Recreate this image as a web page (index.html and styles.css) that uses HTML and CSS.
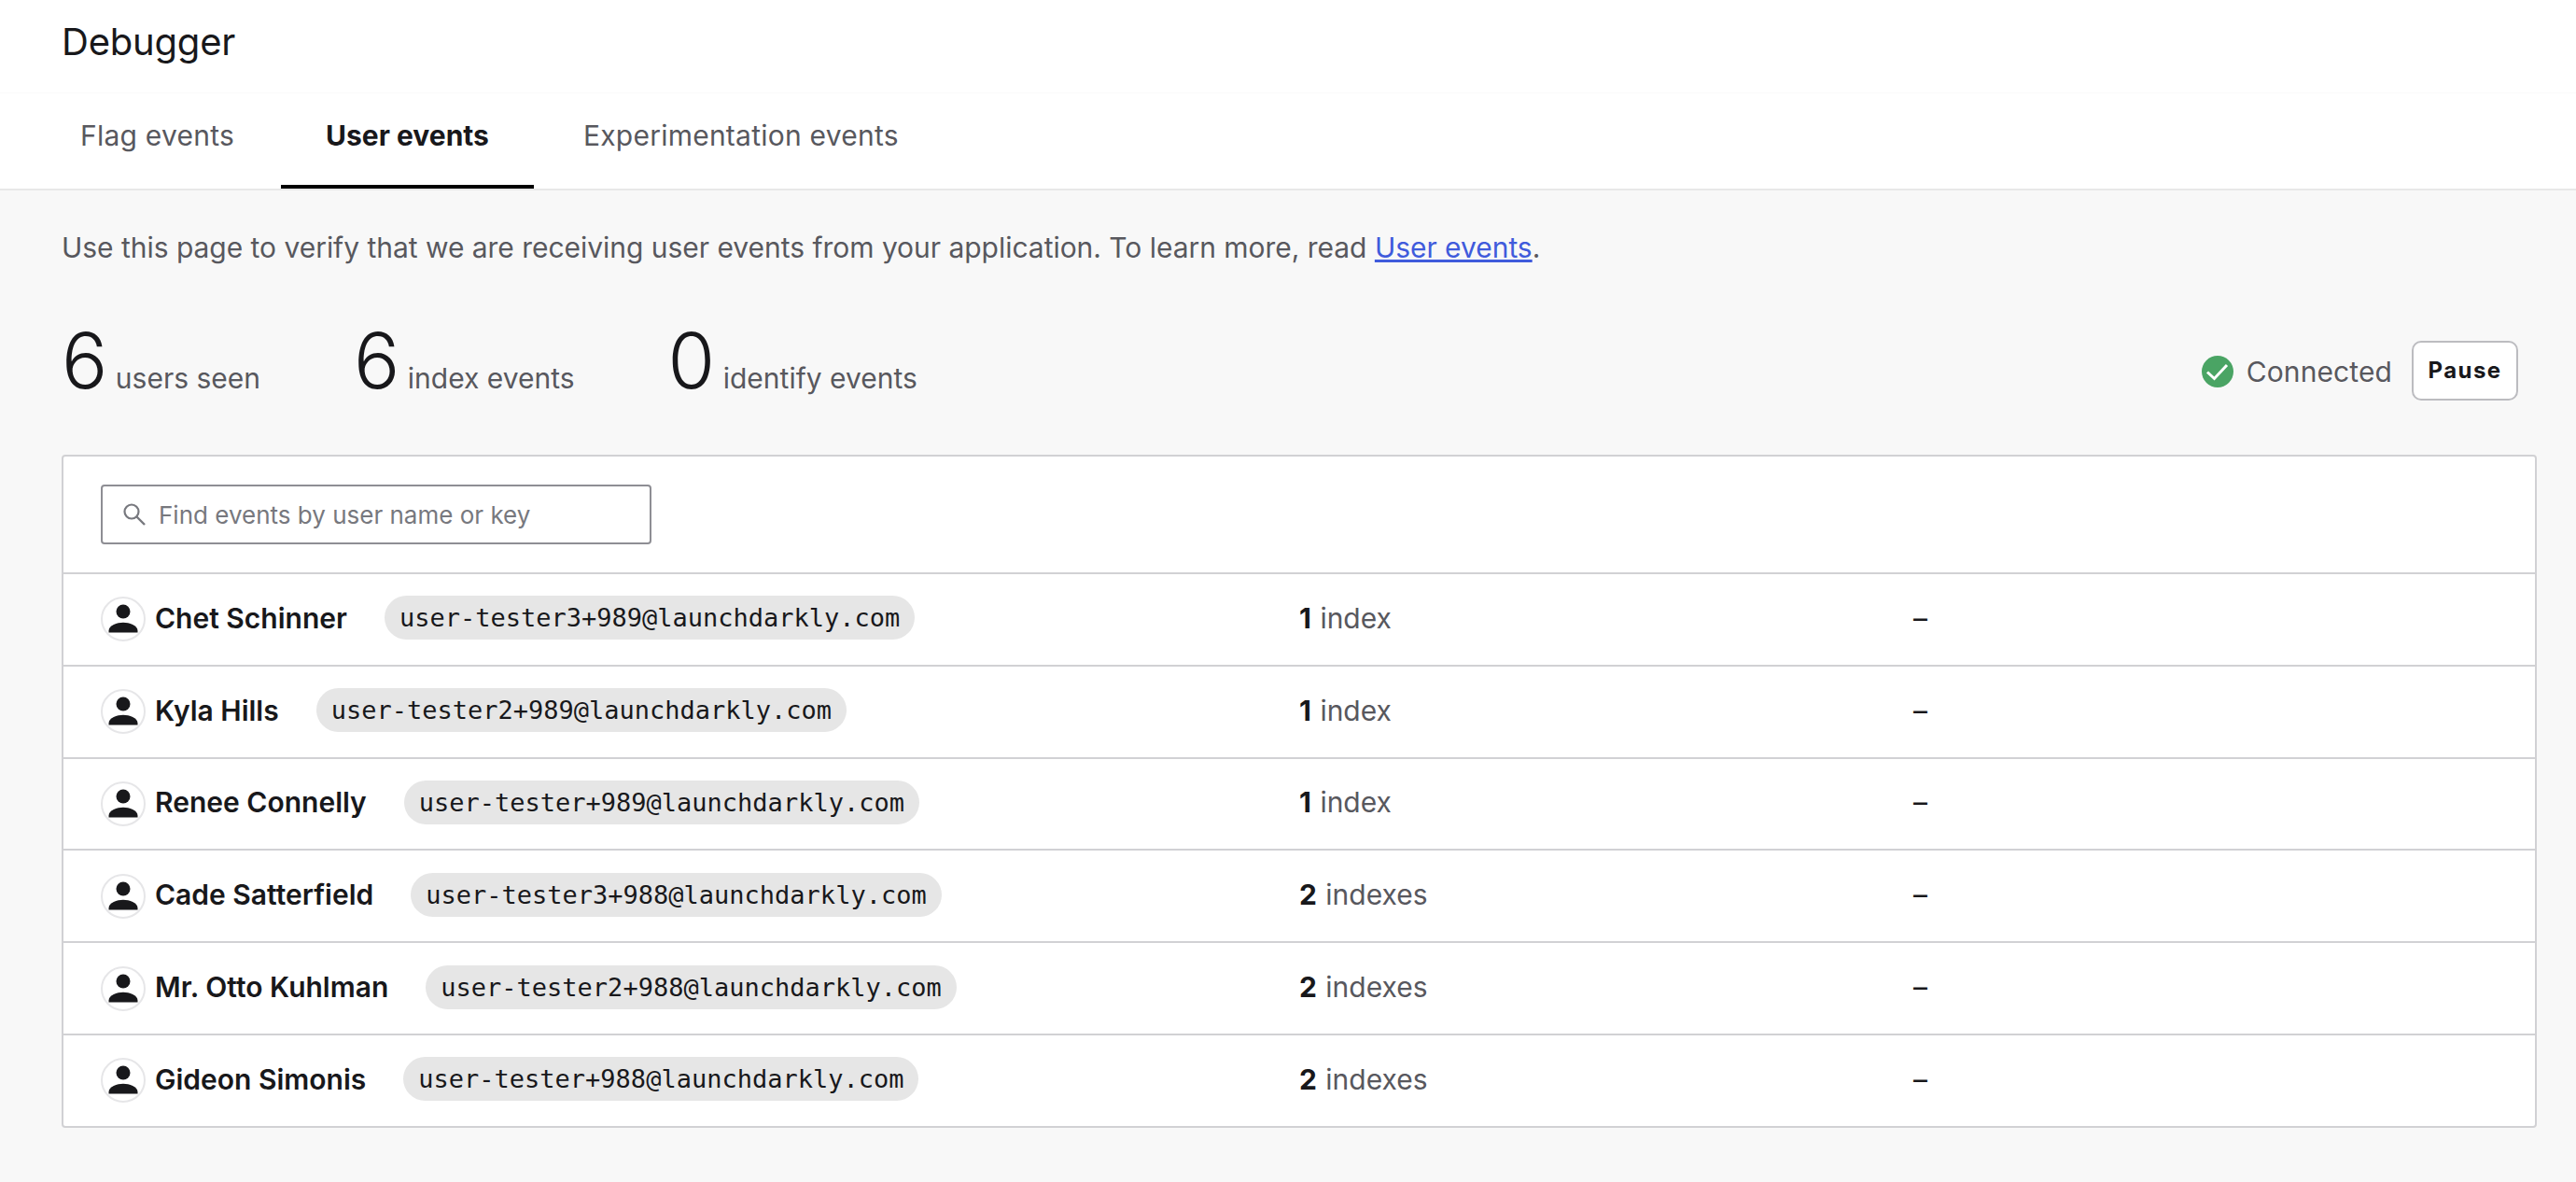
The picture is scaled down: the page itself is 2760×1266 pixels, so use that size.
FILE: index.html
```html
<!DOCTYPE html>
<html lang="en">
<head>
    <meta charset="UTF-8">
    <title>Debugger</title>
    <link rel="stylesheet" href="styles.css">
</head>
<body>
    <header class="header">
        <h1 class="title">Debugger</h1>
        <nav class="tabs">
            <a href="#" class="tab">Flag events</a>
            <a href="#" class="tab tab-active">User events</a>
            <a href="#" class="tab">Experimentation events</a>
        </nav>
    </header>

    <main class="main">
        <p class="intro">Use this page to verify that we are receiving user events from your application. To learn more, read <a href="#">User events</a>.</p>

        <section class="summary">
            <div class="stats">
                <div class="stat"><span class="stat-num">6</span> <span class="stat-label">users seen</span></div>
                <div class="stat"><span class="stat-num">6</span> <span class="stat-label">index events</span></div>
                <div class="stat"><span class="stat-num">0</span> <span class="stat-label">identify events</span></div>
            </div>
            <div class="status">
                <svg class="status-icon" viewBox="0 0 34 34">
                    <circle cx="17" cy="17" r="17" fill="#4aa464"/>
                    <path d="M6 17.5l7.5 7L27 10" fill="none" stroke="#fff" stroke-width="3"/>
                </svg>
                <span class="status-text">Connected</span>
                <button class="pause-btn">Pause</button>
            </div>
        </section>

        <section class="card">
            <div class="search-row">
                <label class="search">
                    <svg class="search-icon" viewBox="0 0 24 24">
                        <circle cx="9" cy="9" r="7.5" fill="none" stroke="#77787e" stroke-width="2.2"/>
                        <path d="M14.5 14.5L23 23" fill="none" stroke="#77787e" stroke-width="2.4"/>
                    </svg>
                    <input type="text" placeholder="Find events by user name or key">
                </label>
            </div>

            <div class="row">
                <div class="user">
                    <span class="avatar"><svg viewBox="2 2 44 44"><circle cx="24" cy="16" r="7.5"/><path d="M8.5 38.5v-2c0-6 9-8.8 15.5-8.8s15.5 2.8 15.5 8.8v2z"/></svg></span>
                    <span class="user-name">Chet Schinner</span>
                    <code class="user-key">user-tester3+989@launchdarkly.com</code>
                </div>
                <div class="count"><b>1</b> index</div>
                <div class="dash">–</div>
            </div>
            <div class="row">
                <div class="user">
                    <span class="avatar"><svg viewBox="2 2 44 44"><circle cx="24" cy="16" r="7.5"/><path d="M8.5 38.5v-2c0-6 9-8.8 15.5-8.8s15.5 2.8 15.5 8.8v2z"/></svg></span>
                    <span class="user-name">Kyla Hills</span>
                    <code class="user-key">user-tester2+989@launchdarkly.com</code>
                </div>
                <div class="count"><b>1</b> index</div>
                <div class="dash">–</div>
            </div>
            <div class="row">
                <div class="user">
                    <span class="avatar"><svg viewBox="2 2 44 44"><circle cx="24" cy="16" r="7.5"/><path d="M8.5 38.5v-2c0-6 9-8.8 15.5-8.8s15.5 2.8 15.5 8.8v2z"/></svg></span>
                    <span class="user-name">Renee Connelly</span>
                    <code class="user-key">user-tester+989@launchdarkly.com</code>
                </div>
                <div class="count"><b>1</b> index</div>
                <div class="dash">–</div>
            </div>
            <div class="row">
                <div class="user">
                    <span class="avatar"><svg viewBox="2 2 44 44"><circle cx="24" cy="16" r="7.5"/><path d="M8.5 38.5v-2c0-6 9-8.8 15.5-8.8s15.5 2.8 15.5 8.8v2z"/></svg></span>
                    <span class="user-name">Cade Satterfield</span>
                    <code class="user-key">user-tester3+988@launchdarkly.com</code>
                </div>
                <div class="count"><b>2</b> indexes</div>
                <div class="dash">–</div>
            </div>
            <div class="row">
                <div class="user">
                    <span class="avatar"><svg viewBox="2 2 44 44"><circle cx="24" cy="16" r="7.5"/><path d="M8.5 38.5v-2c0-6 9-8.8 15.5-8.8s15.5 2.8 15.5 8.8v2z"/></svg></span>
                    <span class="user-name">Mr. Otto Kuhlman</span>
                    <code class="user-key">user-tester2+988@launchdarkly.com</code>
                </div>
                <div class="count"><b>2</b> indexes</div>
                <div class="dash">–</div>
            </div>
            <div class="row">
                <div class="user">
                    <span class="avatar"><svg viewBox="2 2 44 44"><circle cx="24" cy="16" r="7.5"/><path d="M8.5 38.5v-2c0-6 9-8.8 15.5-8.8s15.5 2.8 15.5 8.8v2z"/></svg></span>
                    <span class="user-name">Gideon Simonis</span>
                    <code class="user-key">user-tester+988@launchdarkly.com</code>
                </div>
                <div class="count"><b>2</b> indexes</div>
                <div class="dash">–</div>
            </div>
        </section>
    </main>
</body>
</html>
```

FILE: styles.css
```css
* {
    margin: 0;
    padding: 0;
    box-sizing: border-box;
}

body {
    font-family: Inter, "Liberation Sans", sans-serif;
    background-color: #f8f8f8;
    color: #18181b;
    height: 1266px;
    overflow: hidden;
}

.header {
    background-color: #fff;
    height: 204px;
    border-bottom: 2px solid #e8e8e8;
}

.title {
    height: 100px;
    padding: 20px 66px 0;
    font-size: 40px;
    line-height: 50px;
    font-weight: 400;
    letter-spacing: -0.2px;
    border-bottom: 1px solid #fafafa;
}

.tabs {
    display: flex;
    height: 102px;
    padding-left: 37px;
}

.tab {
    display: flex;
    align-items: center;
    padding: 0 49px 8px;
    font-size: 30px;
    letter-spacing: 0.24px;
    color: #58585e;
    text-decoration: none;
    border-bottom: 4px solid transparent;
    margin-right: 1px;
}

.tab-active {
    padding: 0 48px 8px;
    margin-right: 4px;
    font-weight: 700;
    letter-spacing: 0;
    color: #18181b;
    border-bottom-color: #000;
}

.main {
    padding: 0 42px 0 66px;
}

.intro {
    padding-top: 41px;
    font-size: 30px;
    line-height: 40px;
    letter-spacing: -0.03px;
    color: #58585e;
}

.intro a {
    color: #405bdc;
}

.summary {
    display: flex;
    justify-content: space-between;
    align-items: center;
    height: 202px;
    padding-right: 20px;
}

.stats {
    display: flex;
    gap: 100px;
    margin-top: 2px;
}

.stat-num {
    font-size: 82px;
    font-weight: 300;
    line-height: 92px;
}

.stat-label {
    font-size: 30px;
    color: #58585e;
    margin-left: 4px;
}

.status {
    display: flex;
    align-items: center;
    margin-top: 21px;
}

.status-icon {
    width: 34px;
    height: 34px;
    margin-top: 3px;
    margin-right: 14px;
}

.status-text {
    margin-top: 3px;
    font-size: 30px;
    letter-spacing: 0.1px;
    color: #58585e;
    margin-right: 21px;
}

.pause-btn {
    width: 114px;
    height: 64px;
    background-color: #fff;
    border: 2px solid #bcbcc0;
    border-radius: 10px;
    font-family: inherit;
    font-size: 24px;
    font-weight: 700;
    letter-spacing: 1.4px;
    color: #18181b;
}

.card {
    background-color: #fff;
    border: 2px solid #d1d1d4;
    border-radius: 4px;
}

.search-row {
    height: 124px;
    padding: 30px 40px 0;
}

.search {
    display: flex;
    align-items: center;
    width: 590px;
    height: 64px;
    padding: 0 22px;
    border: 2px solid #8e8e94;
    border-radius: 4px;
}

.search-icon {
    flex: none;
    width: 24px;
    height: 24px;
    margin-right: 14px;
}

.search input {
    flex: 1;
    min-width: 0;
    border: none;
    outline: none;
    font-family: inherit;
    font-size: 26px;
    color: #18181b;
}

.search input::placeholder {
    color: #77787e;
    opacity: 1;
}

.row {
    display: grid;
    grid-template-columns: 1284px 658px 1fr;
    align-items: center;
    height: 98.8px;
    padding: 0 0 3px 40px;
    border-top: 2px solid #d1d1d4;
    font-size: 30px;
}

.user {
    display: flex;
    align-items: center;
}

.avatar {
    display: block;
    width: 48px;
    height: 48px;
    margin-top: 3px;
    margin-right: 10px;
    border: 2px solid #e6e6e8;
    border-radius: 50%;
    background-color: #fff;
}

.avatar svg {
    display: block;
    width: 44px;
    height: 44px;
    fill: #18181b;
}

.user-name {
    font-weight: 600;
    margin-right: 40px;
}

.user-key {
    height: 47px;
    padding: 0 16px;
    border-radius: 24px;
    background-color: #e6e6e6;
    font-family: "DejaVu Sans Mono", monospace;
    font-size: 27px;
    line-height: 47px;
}

.count {
    color: #58585e;
}

.count b {
    font-weight: 700;
    margin-right: 1px;
    color: #18181b;
}

.dash {
    color: #18181b;
}
```
